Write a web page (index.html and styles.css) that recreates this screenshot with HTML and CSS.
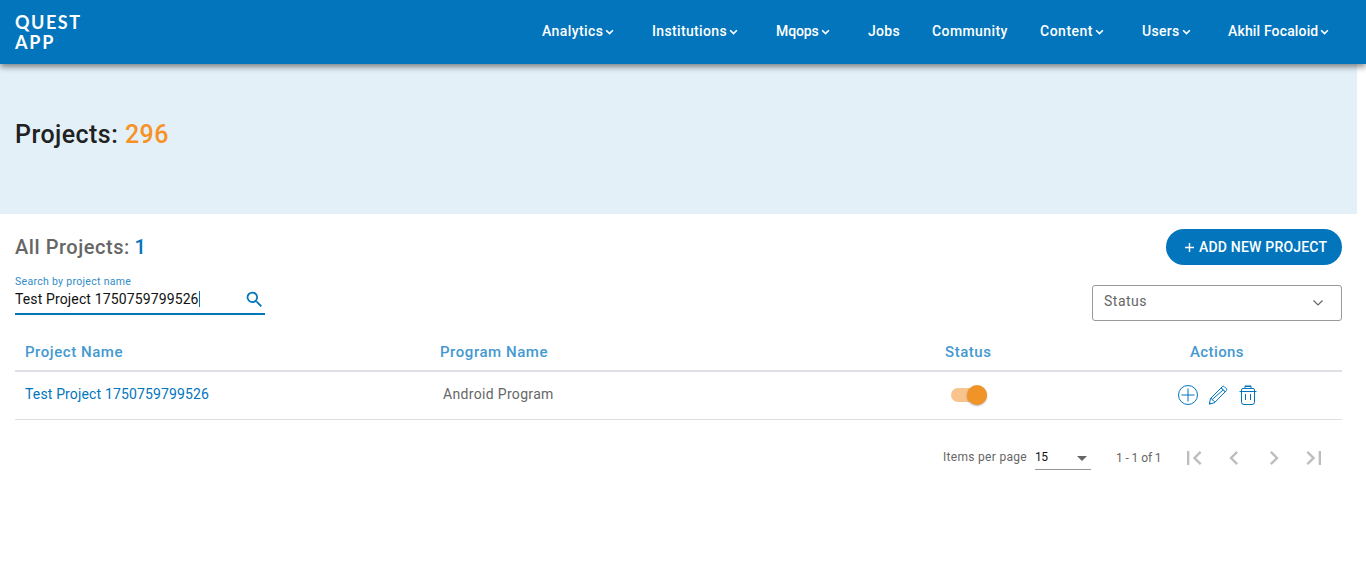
FILE: index.html
```html
<!DOCTYPE html>
<html lang="en">
<head>
<meta charset="utf-8">
<title>Projects</title>
<link rel="stylesheet" href="styles.css">
</head>
<body>
<header class="topbar">
  <a class="logo"><span class="logo-quest">QUEST</span><span class="logo-app">APP</span></a>
  <nav class="nav">
    <a class="nav-item w-analytics"><span>Analytics</span><svg class="chev" viewBox="0 0 8 6"><path d="M1 1l3 3 3-3"/></svg></a>
    <a class="nav-item w-institutions"><span>Institutions</span><svg class="chev" viewBox="0 0 8 6"><path d="M1 1l3 3 3-3"/></svg></a>
    <a class="nav-item w-mqops"><span>Mqops</span><svg class="chev" viewBox="0 0 8 6"><path d="M1 1l3 3 3-3"/></svg></a>
    <a class="nav-item w-jobs"><span>Jobs</span></a>
    <a class="nav-item w-community"><span>Community</span></a>
    <a class="nav-item w-content"><span>Content</span><svg class="chev" viewBox="0 0 8 6"><path d="M1 1l3 3 3-3"/></svg></a>
    <a class="nav-item w-users"><span>Users</span><svg class="chev" viewBox="0 0 8 6"><path d="M1 1l3 3 3-3"/></svg></a>
    <a class="nav-item w-account"><span>Akhil Focaloid</span><svg class="chev" viewBox="0 0 8 6"><path d="M1 1l3 3 3-3"/></svg></a>
  </nav>
</header>
<section class="banner"><h1>Projects: <span>296</span></h1></section>
<main class="content">
  <div class="title-row">
    <h2>All Projects: <span>1</span></h2>
    <button class="add"><svg class="plus" viewBox="0 0 9 9"><path d="M4.500 0v9M0 4.500h9"/></svg><span class="add-label">ADD NEW PROJECT</span></button>
  </div>
  <div class="filter-row">
    <div class="search">
      <label>Search by project name</label>
      <div class="search-line">
        <span class="search-value">Test Project 1750759799526</span><i class="caret"></i>
        <svg class="search-icon" viewBox="0 0 24 24"><path d="M15.500 14h-.790l-.280-.270A6.470 6.470 0 0 0 16 9.500 6.500 6.500 0 1 0 9.500 16c1.610 0 3.090-.590 4.230-1.570l.270.280v.790l5 4.990L20.490 19l-4.990-5zm-6 0C7.010 14 5 11.990 5 9.500S7.010 5 9.500 5 14 7.010 14 9.500 11.990 14 9.500 14z"/></svg>
      </div>
    </div>
    <div class="select"><span>Status</span><svg viewBox="0 0 10 6"><path d="M.5 .5L5 5l4.500-4.500"/></svg></div>
  </div>
  <div class="row head">
    <span class="h-project">Project Name</span><span class="h-program">Program Name</span><span class="h-status">Status</span><span class="h-actions">Actions</span>
  </div>
  <div class="row data">
    <span class="d-project">Test Project 1750759799526</span><span class="d-program">Android Program</span>
    <span class="d-status"><i class="toggle"><i class="knob"></i></i></span>
    <span class="d-actions">
      <svg viewBox="0 0 20 20"><circle cx="10" cy="10" r="9.500"/><path d="M10 3.500v13M3.500 10h13"/></svg>
      <svg viewBox="0 0 20 20"><path d="M1.300 19.200l1.200-5.700L14.300 1.700q1-1 2 0l2 2q1 1 0 2L6.500 17.700zM2.500 13.500q1.500-.3 1.700 1 .3 1.300 1.600 1.300 1 .4.700 1.900M12.800 3.200q2 0 2.200 1.800 1.800.2 2 2M4.200 14.500L15 5M1.600 17.500l1.400 1.400"/></svg>
      <svg viewBox="0 0 20 20"><path d="M3.500 6.500v10.500q0 2.500 2.500 2.500h8q2.500 0 2.500-2.500V6.500M1.500 6.500h17M3.500 6.500V5q0-1.500 1.500-1.500h10q1.500 0 1.500 1.500v1.500M7.500 9v6M12.500 9v6"/><path d="M7 3.500V1h6v2.500M7 1.500h6"/></svg>
    </span>
  </div>
  <div class="pager">
    <span class="per-page">Items per page</span>
    <div class="page-size"><span>15</span><i class="tri"></i></div>
    <span class="range">1 - 1 of 1</span>
    <div class="arrows">
      <svg viewBox="0 0 24 24"><path d="M18.410 16.590L13.820 12l4.590-4.590L17 6l-6 6 6 6zM6 6h2v12H6z"/></svg>
      <svg viewBox="0 0 24 24"><path d="M15.410 7.410L14 6l-6 6 6 6 1.410-1.410L10.830 12z"/></svg>
      <svg viewBox="0 0 24 24"><path d="M10 6L8.590 7.410 13.170 12l-4.580 4.590L10 18l6-6z"/></svg>
      <svg viewBox="0 0 24 24"><path d="M5.590 7.410L10.180 12l-4.590 4.590L7 18l6-6-6-6zM16 6h2v12h-2z"/></svg>
    </div>
  </div>
</main>
</body>
</html>
```
FILE: styles.css
```css
* { box-sizing: border-box; }
body { margin: 0; height: 581px; overflow: hidden; background: #fff; font-family: Roboto, "Open Sans", sans-serif; font-size: 14px; color: #666; }
h1, h2 { margin: 0; font-weight: 500; white-space: nowrap; }
span, label { white-space: nowrap; }
svg { display: block; flex: none; }

.topbar { position: relative; height: 64px; background: #0275bc; display: flex; justify-content: space-between; padding-left: 15px; box-shadow: 0 3px 6px rgba(0,0,0,.45); }
.logo { display: flex; flex-direction: column; padding-top: 12px; color: #fff; font: 700 18px/20px Lato, sans-serif; }
.logo-quest { letter-spacing: 1.500px; }
.logo-app { letter-spacing: 1.800px; }
.nav { display: flex; padding-top: 21px; }
.nav-item { display: flex; justify-content: flex-start; height: 20px; line-height: 20px; color: #fff; font-weight: 500; letter-spacing: .4px; }
.chev { width: 9px; height: 7px; margin: 8px 0 0 2px; fill: none; stroke: #fff; stroke-width: 1.500; }
.w-analytics { width: 110px; }
.w-institutions { width: 124px; letter-spacing: .35px; }
.w-mqops { width: 92px; letter-spacing: -.1px; }
.w-jobs { width: 64px; letter-spacing: .3px; }
.w-community { width: 108px; }
.w-content { width: 102px; letter-spacing: .5px; }
.w-users { width: 86px; letter-spacing: .3px; }
.w-account { width: 138px; letter-spacing: .15px; }

.banner { width: 1357px; height: 150px; background: #e3f0f8; padding: 56px 15px 0; }
.banner h1 { font-size: 25px; line-height: 30px; color: #212121; letter-spacing: .45px; }
.banner h1 span { color: #f79226; }

.content { width: 1357px; padding: 15px 15px 0; }
.title-row { display: flex; justify-content: space-between; height: 56px; }
.title-row h2 { font-size: 20px; line-height: 36px; letter-spacing: .55px; }
.title-row h2 span { color: #0275bc; margin-left: -1px; }
.add { width: 176px; height: 36px; border: 0; border-radius: 18px; background: #0275bc; color: #fff; padding: 0 0 0 19px; display: flex; align-items: center; gap: 5px; font: 500 14px/34px Roboto, sans-serif; }
.plus { width: 9px; height: 9px; fill: none; stroke: #fff; stroke-width: 1.400; }
.add-label { letter-spacing: .2px; margin-top: -1px; }

.filter-row { display: flex; justify-content: space-between; height: 48px; }
.search { width: 250px; height: 40px; margin-top: -10px; border-bottom: 2px solid #0275bc; }
.search label { display: block; font-size: 10.500px; line-height: 14px; letter-spacing: .3px; color: #2f8cc8; }
.search-line { display: flex; align-items: center; height: 20px; color: #111; letter-spacing: .13px; }
.caret { width: 1px; height: 16px; background: #0275bc; }
.search-icon { width: 21px; height: 21px; margin-left: auto; fill: #0275bc; }
.select { width: 250px; height: 36px; border: 1px solid #999; border-radius: 3px; display: flex; justify-content: space-between; padding: 0 18px 0 11px; line-height: 31px; letter-spacing: .5px; }
.select svg { width: 10px; height: 6px; margin-top: 14px; fill: none; stroke: #666; stroke-width: 1.200; }

.row { display: grid; grid-template-columns: 425px 500px 235px 1fr; }
.head { height: 39px; line-height: 39px; border-bottom: 2px solid #dfe0e6; color: #4499d0; font-weight: 500; font-size: 15px; letter-spacing: .55px; }
.h-project, .d-project { padding-left: 10px; }
.h-status { padding-left: 5px; }
.h-actions { padding-left: 15px; letter-spacing: .4px; }
.data { height: 48px; line-height: 45px; border-bottom: 1px solid #dedede; }
.d-project { color: #0275bc; letter-spacing: .15px; }
.d-program { padding-left: 3px; letter-spacing: .33px; }
.d-status { padding: 16px 0 0 11px; }
.toggle { display: block; position: relative; width: 36px; height: 14px; border-radius: 7px; background: #f8c48c; }
.knob { position: absolute; right: 0; top: -3px; width: 20px; height: 20px; border-radius: 50%; background: #f09428; box-shadow: 0 1px 2px rgba(0,0,0,.3); }
.d-actions { display: flex; gap: 10px; padding: 13px 0 0 3px; }
.d-actions svg { width: 20px; height: 20px; fill: none; stroke: #0275bc; stroke-width: 1; }

.pager { display: flex; height: 76px; padding-left: 928px; font-size: 12px; line-height: 20px; padding-top: 27px; }
.per-page { width: 92px; letter-spacing: .3px; }
.page-size { width: 56px; height: 23px; border-bottom: 1px solid #949494; color: #111; display: flex; justify-content: space-between; padding-right: 4px; letter-spacing: -.4px; }
.tri { border: 5px solid transparent; border-top-color: #666; border-bottom: 0; height: 5px; margin-top: 9px; }
.range { margin-left: 25px; width: 64px; line-height: 22px; letter-spacing: -.1px; }
.arrows { display: flex; gap: 12px; margin-top: -3px; }
.arrows svg { width: 28px; height: 28px; fill: #bdbdbd; }
```
